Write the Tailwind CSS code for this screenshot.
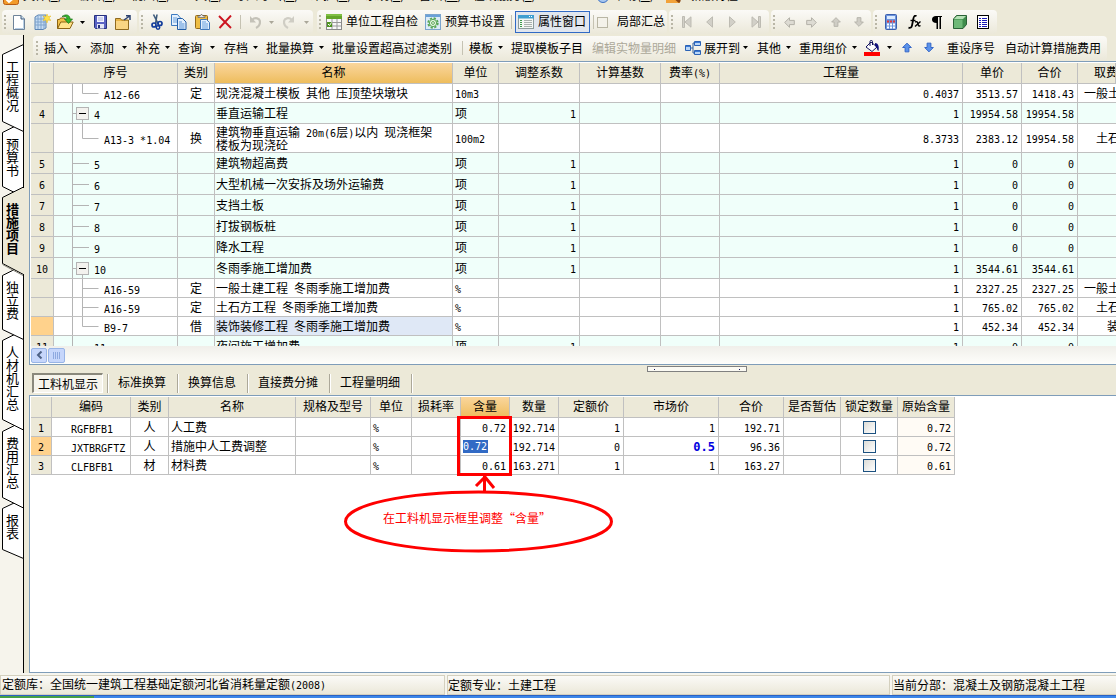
<!DOCTYPE html>
<html lang="zh-CN">
<head>
<meta charset="utf-8">
<title>措施项目</title>
<script src="https://cdn.jsdelivr.net/npm/@tailwindcss/browser@4"></script>
</head>
<body class="h-screen overflow-hidden flex flex-col bg-[#ece9d8] text-black text-[12px] leading-[16px] font-['Noto_Sans_CJK_SC',sans-serif] whitespace-nowrap">

<svg class="hidden">
  <symbol id="caret" viewBox="0 0 5 3"><path d="M0 0h5L2.5 3z"/></symbol>
  <symbol id="grip" viewBox="0 0 2 14"><path fill="#b9b6a6" d="M0 0h2v2H0zM0 4h2v2H0zM0 8h2v2H0zM0 12h2v2H0z"/></symbol>
  <symbol id="arrow" viewBox="0 0 11 11"><path stroke-linejoin="round" d="M5.5.7l4.8 4.8H7.6v4.8H3.4V5.500H.7z"/></symbol>
</svg>

<!-- menu bar, scrolled so only its lower edge shows -->
<nav class="h-[10px] shrink-0 overflow-hidden flex items-end pb-[7px]">
  <svg class="ml-[3px] mr-[4px] -mb-[2px] shrink-0" width="16" height="16" viewBox="0 0 16 16"><rect x=".5" y=".5" width="15" height="15" rx="2" fill="#f29a28" stroke="#b85a10"/><path d="M3 10l3 3 7-6" stroke="#fff" stroke-width="2" fill="none"/></svg>
  <a href="#" class="w-[54px]">文件(<u>F</u>)</a><a href="#" class="w-[54px]">编辑(<u>E</u>)</a><a href="#" class="w-[52px]">视图(<u>V</u>)</a><a href="#" class="w-[51px]">工具(<u>T</u>)</a><a href="#" class="w-[77px]">导入导出(<u>D</u>)</a><a href="#" class="w-[54px]">维护(<u>D</u>)</a><a href="#" class="w-[54px]">系统(<u>S</u>)</a><a href="#" class="w-[54px]">窗口(<u>W</u>)</a><a href="#" class="w-[70px]">在线服务(<u>L</u>)</a>
  <a href="#" class="ml-[54px] w-[69px] flex gap-1"><svg width="12" height="16" viewBox="0 0 12 16"><circle cx="6" cy="10" r="5.500" fill="#a9c8f0" stroke="#3c6fc0"/></svg><span>帮助(<u>H</u>)</span></a>
  <a href="#" class="flex gap-2"><svg width="16" height="16" viewBox="0 0 16 16"><rect width="14" height="16" fill="#f2a23a"/><path d="M6 8l8 7" stroke="#8a4510" stroke-width="3"/></svg>新版特性</a>
</nav>

<!-- icon toolbar -->
<div class="h-[25px] shrink-0 flex pl-[2px] pb-px gap-[2px]">
  <div class="flex items-center w-[135px] rounded bg-linear-to-b from-[#fbfaf7] to-[#ebe8d9]">
    <svg class="ml-[2px] mr-[3px]" width="2" height="14"><use href="#grip"/></svg>
    <button aria-label="新建" class="w-[20px] flex justify-center"><svg width="12" height="15" viewBox="0 0 12 15"><path d="M1 .5h7l3.500 3.500v10.500H.5V.5z" fill="#fff" stroke="#6e8399"/><path d="M8 .5V4h3.500" fill="#cfe0f2" stroke="#3d5878"/><path d="M10.500 5v8.500H2" stroke="#b8cfe6" fill="none"/></svg></button>
    <button aria-label="新建向导" class="w-[26px] flex justify-center"><svg width="17" height="16" viewBox="0 0 17 16"><path d="M1 3l3-2h8v13l-3 1.500H1z" fill="#c6dcf3" stroke="#5b84b4"/><path d="M4 2v13M7 2v13M10 2v13M1 5h11M1 8h11M1 11h11" stroke="#7ea3cd" fill="none"/><path d="M13 0l1 2.500L17 2l-2 2 2 2.500-3-.5-1 3-1-3-3 .5 2-2.500-2-2 3 .5z" fill="#ffe14a" stroke="#e5b820" stroke-width=".5"/></svg></button>
    <button aria-label="打开" class="w-[20px] flex justify-center"><svg width="17" height="16" viewBox="0 0 17 16"><path d="M.5 14.500V5.500h2l1-1.500h4l1 1.500h4v9z" fill="#f2c14a" stroke="#8c6414"/><path d="M.7 14.500l3-6.500h12.500l-3.200 6.500z" fill="#ffe48c" stroke="#8c6414"/><path d="M5 2.500C9-.5 13 1 13 5h2.500l-4 4.500-4-4.500H10c0-2-2-3-5-2.500z" fill="#35b52c" stroke="#11700f" stroke-width=".7"/></svg></button>
    <button aria-label="打开列表" class="w-[14px] flex justify-center"><svg width="5" height="3"><use href="#caret"/></svg></button>
    <button aria-label="保存" class="w-[22px] flex justify-center"><svg width="13" height="14" viewBox="0 0 13 14"><path d="M.5.5h12v13H1.500l-1-1z" fill="#5a63c4" stroke="#26307e"/><path d="M3 1h7v6H3z" fill="#f4f5ff"/><path d="M4 3h5M4 5h5" stroke="#a9b0dc"/><path d="M3 9h7v4.500H3z" fill="#e4e6f6"/><path d="M4 10h2v3H4z" fill="#26307e"/></svg></button>
    <button aria-label="导出" class="w-[24px] flex justify-center"><svg width="16" height="15" viewBox="0 0 16 15"><path d="M.5 14.500v-11h5l1 1.500h7v9.500z" fill="#e8b548" stroke="#8f6a20"/><path d="M1 6h12v8H1z" fill="#f9d583"/><path d="M9 5l5-3.500M11 .8h4V5" stroke="#2d4270" stroke-width="1.500" fill="none"/></svg></button>
  </div>
  <div class="flex items-center w-[174px] rounded bg-linear-to-b from-[#fbfaf7] to-[#ebe8d9]">
    <svg class="ml-[2px] mr-[3px]" width="2" height="14"><use href="#grip"/></svg>
    <button aria-label="剪切" class="w-[22px] flex justify-center"><svg width="12" height="16" viewBox="0 0 12 16"><path d="M2.500.5l5 10M6 .5L4.500 10" stroke="#3e5b7c" stroke-width="1.600"/><circle cx="3" cy="11" r="2" fill="none" stroke="#123c9c" stroke-width="1.700"/><circle cx="9" cy="9.500" r="2" fill="none" stroke="#123c9c" stroke-width="1.700"/><circle cx="7" cy="13.500" r="1.700" fill="none" stroke="#123c9c" stroke-width="1.500"/></svg></button>
    <button aria-label="复制" class="w-[22px] flex justify-center"><svg width="16" height="16" viewBox="0 0 16 16"><path d="M.5.5h6L9.500 4v7.500h-9z" fill="#e4f0fd" stroke="#3d7ac0"/><path d="M2 4h4M2 6h5M2 8h5" stroke="#6ba1dd"/><path d="M6.500 4.500h5l3.500 3.500v7.500H6.500z" fill="#e4f0fd" stroke="#245fa8"/><path d="M8 8h3M8 10h5.500M8 12h5.500M8 14h5.500" stroke="#5a95d8"/></svg></button>
    <button aria-label="粘贴" class="w-[24px] flex justify-center"><svg width="15" height="16" viewBox="0 0 15 16"><rect x=".5" y="1.500" width="12" height="13" rx="1" fill="#eebd43" stroke="#93691a"/><path d="M3 3.500h7V2H8L7 .5H6L5 2H3z" fill="#e8e8e8" stroke="#666" stroke-width=".7"/><path d="M5.500 5.500h6l3 3v7h-9z" fill="#e4f0fd" stroke="#4279bb"/><path d="M7 8h4M7 10h6M7 12h6M7 14h6" stroke="#6ba1dd"/></svg></button>
    <button aria-label="删除" class="w-[22px] flex justify-center"><svg width="14" height="14" viewBox="0 0 14 14"><path d="M1 1l12 12M13 .5L1.500 13" stroke="#cc1420" stroke-width="1.900"/></svg></button>
    <span class="ml-[4px] mr-[5px] w-px h-[14px] bg-[#c5c2b2]"></span>
    <button aria-label="撤销" class="w-[17px] flex justify-center"><svg width="12" height="13" viewBox="0 0 12 13"><path d="M1 0v6.500h6z" fill="#c4c2b8"/><path d="M3 4c3-3 8-2 8 2 0 3-2 5-4 6" fill="none" stroke="#c4c2b8" stroke-width="2.200"/></svg></button>
    <button aria-label="撤销列表" class="w-[16px] flex justify-center"><svg width="5" height="3" fill="#aaa799"><use href="#caret"/></svg></button>
    <button aria-label="恢复" class="w-[20px] flex justify-center"><svg width="12" height="13" viewBox="0 0 12 13"><path d="M11 0v6.500H5z" fill="#cfcdc4"/><path d="M9 4C6 1 1 2 1 6c0 3 2 5 4 6" fill="none" stroke="#cfcdc4" stroke-width="2.200"/></svg></button>
    <button aria-label="恢复列表" class="w-[14px] flex justify-center"><svg width="5" height="3" fill="#aaa799"><use href="#caret"/></svg></button>
  </div>
  <div class="ml-[2px] flex items-center w-[350px] rounded bg-linear-to-b from-[#fbfaf7] to-[#ebe8d9]">
    <svg class="ml-[2px] mr-[3px]" width="2" height="14"><use href="#grip"/></svg>
    <button class="w-[100px] pl-[2px] flex items-center gap-1"><svg width="16" height="16" viewBox="0 0 16 16"><rect x=".5" y=".5" width="15" height="15" fill="#f8f8f8" stroke="#8a8a8a"/><path d="M0 0h16v5H0z" fill="#64a52a"/><path d="M0 1h16" stroke="#9bd95c"/><path d="M1 8.500h14M1 12h14M6 5v10M11 5v10" stroke="#999"/><path d="M1 8h5v5H1z" fill="#4f9420"/><path d="M2 10l1.500 1.500L5.500 8.500" stroke="#fff" fill="none"/></svg><span class="pb-[2px]">单位工程自检</span></button>
    <button class="w-[87px] pl-px flex items-center gap-1"><svg width="16" height="16" viewBox="0 0 16 16"><rect x=".5" y=".5" width="15" height="15" fill="#dcebf8" stroke="#7ba5ce"/><path d="M1 1h14v2H1z" fill="#6aa0d8"/><circle cx="8" cy="9" r="4.700" fill="none" stroke="#58a653" stroke-width="2" stroke-dasharray="2.200 1.500"/><circle cx="8" cy="9" r="3.600" fill="#e9f6e4" stroke="#58a653"/><circle cx="8" cy="9" r="1.400" fill="#fff" stroke="#58a653"/></svg><span class="pb-[2px]">预算书设置</span></button>
    <span class="w-px h-[14px] mr-[3px] bg-[#c5c2b2]"></span>
    <button class="w-[75px] h-[22px] pl-[2px] flex items-center gap-1 border border-[#316ac5] bg-[#e1e6ee]"><svg width="16" height="14" viewBox="0 0 16 14"><rect x=".5" y=".5" width="15" height="13" fill="#f4f7f4" stroke="#8d9c9c"/><path d="M0 0h16v3.500H0z" fill="#3f9ed0"/><path d="M11 1.500h1M13 1.500h1" stroke="#fff"/><path d="M2 5.500h2M2 7.500h2M2 9.500h2M2 11.500h2" stroke="#3d9c4c"/><path d="M6 5.500h8M6 7.500h8M6 9.500h8M6 11.500h8" stroke="#a9b0ae"/></svg><span class="pb-[2px]">属性窗口</span></button>
    <span class="w-px h-[14px] ml-[3px] mr-[3px] bg-[#c5c2b2]"></span>
    <label class="flex items-center gap-[9px]"><input type="checkbox" class="appearance-none size-[11px] border border-[#b9b6a4] bg-[#f4f2ea]"><span class="pb-[2px]">局部汇总</span></label>
  </div>
  <div class="flex items-center w-[100px] rounded bg-linear-to-b from-[#fbfaf7] to-[#ebe8d9]">
    <svg class="ml-[2px] mr-[3px]" width="2" height="14"><use href="#grip"/></svg>
    <button aria-label="首行" class="w-[22px] flex justify-center"><svg width="10" height="12" viewBox="0 0 10 12" fill="#d2d0c8" stroke="#bdbbb2"><path d="M.5.5h2v11h-2zM9 .8v10.400L3 6z"/></svg></button>
    <button aria-label="上一行" class="w-[23px] flex justify-center"><svg width="7" height="12" viewBox="0 0 7 12" fill="#d2d0c8" stroke="#bdbbb2"><path d="M6.500.8v10.400L.7 6z"/></svg></button>
    <button aria-label="下一行" class="w-[22px] flex justify-center"><svg width="7" height="12" viewBox="0 0 7 12" fill="#d2d0c8" stroke="#bdbbb2"><path d="M.5.8v10.400L6.300 6z"/></svg></button>
    <button aria-label="末行" class="w-[26px] flex justify-center"><svg width="10" height="12" viewBox="0 0 10 12" fill="#d2d0c8" stroke="#bdbbb2"><path d="M7.500.5h2v11h-2zM1 .8v10.400L7 6z"/></svg></button>
  </div>
  <div class="flex items-center w-[100px] rounded bg-linear-to-b from-[#fbfaf7] to-[#ebe8d9]">
    <svg class="ml-[2px] mr-[3px]" width="2" height="14"><use href="#grip"/></svg>
    <button aria-label="升级" class="w-[22px] flex justify-center"><svg class="-rotate-90" width="11" height="11" fill="#dddbd3" stroke="#b3b1a8"><use href="#arrow"/></svg></button>
    <button aria-label="降级" class="w-[23px] flex justify-center"><svg class="rotate-90" width="11" height="11" fill="#dddbd3" stroke="#b3b1a8"><use href="#arrow"/></svg></button>
    <button aria-label="上移" class="w-[25px] flex justify-center"><svg width="10" height="10" fill="#cfcdc5" stroke="#b3b1a8"><use href="#arrow"/></svg></button>
    <button aria-label="下移" class="w-[21px] flex justify-center"><svg class="rotate-180" width="10" height="10" fill="#cfcdc5" stroke="#b3b1a8"><use href="#arrow"/></svg></button>
  </div>
  <div class="flex items-center w-[124px] rounded bg-linear-to-b from-[#fbfaf7] to-[#ebe8d9]">
    <svg class="ml-[2px] mr-[3px]" width="2" height="14"><use href="#grip"/></svg>
    <button aria-label="计算器" class="w-[22px] flex justify-center"><svg width="12" height="16" viewBox="0 0 12 16"><rect x=".5" y=".5" width="11" height="15" rx="1" fill="#6d94dc" stroke="#3a5fae"/><path d="M2 2h8v3H2z" fill="#dcebff"/><path d="M2 7.500h8" stroke="#e03a3a" stroke-width="2" stroke-dasharray="2 1"/><path d="M2 10.500h8M2 13.500h8" stroke="#fff" stroke-width="2" stroke-dasharray="2 1"/></svg></button>
    <button aria-label="函数" class="w-[24px] flex justify-center"><svg width="13" height="14" viewBox="0 0 13 14" fill="none" stroke="#000"><path d="M8.500 1C6.500.2 5.800 1.500 5.300 4L4 10.500c-.4 2-1.500 2.800-3.500 2.200" stroke-width="1.800"/><path d="M2.500 5.500h5" stroke-width="1.400"/><path d="M7 7c2-1 2.500 0 3 2s1 2.500 2.500 1.500M12.500 6.500l-5.500 5" stroke-width="1.400"/></svg></button>
    <button aria-label="段落" class="w-[22px] flex justify-center"><svg width="10" height="13" viewBox="0 0 10 13"><path d="M4 0h6v1H9v12H7.500V1H6v12H4.500V7C1.500 7 0 5.500 0 3.500S1.500 0 4 0z"/></svg></button>
    <button aria-label="三维" class="w-[24px] flex justify-center"><svg width="14" height="14" viewBox="0 0 14 14"><path d="M.5 4l3-3.500h10v9L10 13.500H.5z" fill="#3f8c4c" stroke="#2a6236"/><path d="M1 4l3-3h9L10 4z" fill="#b5e0b5"/><path d="M1 4.500h8.500V13H1z" fill="#6eb877"/></svg></button>
    <button aria-label="列表" class="w-[22px] flex justify-center"><svg width="12" height="14" viewBox="0 0 12 14"><rect x=".5" y=".5" width="11" height="13" fill="#fff" stroke="#000"/><path d="M2 3.500h2M2 5.500h2M2 7.500h2M2 9.500h2M2 11.500h2M5 3.500h5M5 5.500h5M5 7.500h5M5 9.500h5M5 11.500h5" stroke="#1b1bb8"/></svg></button>
  </div>
</div>

<div class="flex-1 min-h-0 flex">
  <!-- page tabs -->
  <aside class="relative w-[24px] shrink-0 bg-[#f6f4ec] border-r border-black">
    <svg class="absolute inset-0" width="24" height="640" viewBox="0 35 24 640">
      <g fill="#fff" stroke="#000">
        <path d="M23.500 498.500L2.500 508.500V549.500L23.500 558.500z"/>
        <path d="M23.500 421L2.500 431.500V497.500L23.500 508z"/>
        <path d="M23.500 330L2.500 340.500V419.500L23.500 430z"/>
        <path d="M23.500 265L2.500 275.500V329.500L23.500 339.500z"/>
        <path d="M23.500 122L2.500 132.500V186.500L23.500 197z"/>
        <path d="M23.500 44.500L2.500 54.500V121.500L23.500 131.500z"/>
        <path d="M23.500 187L2.500 197.500V263.500L23.500 274.500z" fill="#ece9d8"/>
      </g>
      <path d="M2.500 264.500L23 275.500" stroke="#8a887c"/>
      <path d="M23.500 188V274" stroke="#ece9d8"/>
    </svg>
    <div class="relative pt-[14px] flex flex-col text-[13px]">
      <button class="h-[77px] pb-[3px] w-[24px] flex items-center justify-center [writing-mode:vertical-rl]">工程概况</button>
      <button class="h-[66px] pb-[3px] w-[24px] flex items-center justify-center [writing-mode:vertical-rl]">预算书</button>
      <button class="h-[77px] pb-[3px] w-[24px] flex items-center justify-center [writing-mode:vertical-rl] font-bold">措施项目</button>
      <button class="h-[66px] pb-[3px] w-[24px] flex items-center justify-center [writing-mode:vertical-rl]">独立费</button>
      <button class="h-[90px] pb-[3px] w-[24px] flex items-center justify-center [writing-mode:vertical-rl]">人材机汇总</button>
      <button class="h-[78px] pb-[3px] w-[24px] flex items-center justify-center [writing-mode:vertical-rl]">费用汇总</button>
      <button class="h-[51px] pb-[3px] w-[24px] flex items-center justify-center [writing-mode:vertical-rl]">报表</button>
    </div>
  </aside>

  <main class="flex-1 min-w-0 flex flex-col pl-[5px]">
    <!-- command toolbar -->
    <div class="mt-px ml-[4px] mr-[9px] pb-[2px] h-[25px] shrink-0 flex items-center rounded bg-linear-to-b from-[#fbfaf7] to-[#ebe8d9]">
      <svg class="ml-[3px] mr-[6px] shrink-0" width="2" height="14"><use href="#grip"/></svg>
      <button class="w-[46px] flex items-center gap-[8px]">插入<svg width="5" height="3"><use href="#caret"/></svg></button>
      <button class="w-[46px] flex items-center gap-[8px]">添加<svg width="5" height="3"><use href="#caret"/></svg></button>
      <button class="w-[42px] flex items-center gap-[5px]">补充<svg width="5" height="3"><use href="#caret"/></svg></button>
      <button class="w-[46px] flex items-center gap-[8px]">查询<svg width="5" height="3"><use href="#caret"/></svg></button>
      <button class="w-[42px] flex items-center gap-[5px]">存档<svg width="5" height="3"><use href="#caret"/></svg></button>
      <button class="w-[66px] flex items-center gap-[5px]">批量换算<svg width="5" height="3"><use href="#caret"/></svg></button>
      <button class="w-[130px] text-left">批量设置超高过滤类别</button>
      <span class="w-px h-[14px] mr-[6px] bg-[#c5c2b2]"></span>
      <button class="w-[42px] flex items-center gap-[5px]">模板<svg width="5" height="3"><use href="#caret"/></svg></button>
      <button class="w-[81px] text-left">提取模板子目</button>
      <button disabled class="w-[93px] text-left text-[#aca899]">编辑实物量明细</button>
      <button class="w-[72px] flex items-center gap-[3px]"><svg width="16" height="14" viewBox="0 0 16 14"><path d="M5 7h3M8 2v10M8 2h2M8 12h2" stroke="#35619c" fill="none"/><g fill="#b9d6f7" stroke="#2b62b5"><path d="M.5 4.500h5v5h-5zM9.500.5h6v4h-6zM9.500 9.500h6v4h-6z"/></g><path d="M1 5.500h4M10 1.500h5M10 10.500h5" stroke="#3d7bd6"/></svg>展开到<svg width="5" height="3"><use href="#caret"/></svg></button>
      <button class="w-[42px] flex items-center gap-[5px]">其他<svg width="5" height="3"><use href="#caret"/></svg></button>
      <button class="w-[65px] flex items-center gap-[5px]">重用组价<svg width="5" height="3"><use href="#caret"/></svg></button>
      <button aria-label="填充颜色" class="w-[38px] flex items-center gap-[7px]"><svg width="16" height="16" viewBox="0 0 16 16"><path d="M0 12h16v4H0z" fill="red"/><path d="M2 7l5-5 6 5-5 4.500z" fill="#fff" stroke="#10105c"/><path d="M6 6V1.500C6 0 8.500 0 8.500 1.500V5" fill="none" stroke="#10105c"/><path d="M11 3c3 0 4.500 3 3.500 8-2-1-1-4-3.500-5z" fill="#10107c"/></svg><svg width="5" height="3"><use href="#caret"/></svg></button>
      <button aria-label="上移" class="w-[22px] flex"><svg width="10" height="11" fill="#5b92ea" stroke="#2c5fc4"><use href="#arrow"/></svg></button>
      <button aria-label="下移" class="w-[23px] flex"><svg class="rotate-180" width="10" height="11" fill="#5b92ea" stroke="#2c5fc4"><use href="#arrow"/></svg></button>
      <button class="w-[58px] text-left">重设序号</button>
      <button class="text-left">自动计算措施费用</button>
    </div>

    <!-- measures grid -->
    <section class="shrink-0 border-l border-y border-[#7f9db9] bg-white pl-px pt-px">
      <div class="h-[283px] overflow-hidden">
        <table class="w-full table-fixed border-separate border-spacing-0">
          <colgroup><col class="w-[23px]"><col class="w-[124px]"><col class="w-[37px]"><col class="w-[238px]"><col class="w-[46px]"><col class="w-[81px]"><col class="w-[81px]"><col class="w-[59px]"><col><col class="w-[59px]"><col class="w-[56px]"><col class="w-[38px]"></colgroup>
          <thead><tr id="head1"></tr></thead>
          <tbody id="body1"></tbody>
        </table>
      </div>
      <div class="h-[18px] flex items-center bg-linear-to-b from-[#f0efea] to-[#fefefb]">
        <button aria-label="向左滚动" class="w-[16px] h-[15px] rounded-[2px] border border-[#98b4e6] bg-[#c6d6fb] flex items-center justify-center"><svg width="7" height="8" viewBox="0 0 7 8"><path d="M5.500.5L2 4l3.500 3.500" fill="none" stroke="#4d6185" stroke-width="2"/></svg></button>
        <span class="ml-px w-[17px] h-[15px] rounded-[2px] border border-[#98b4e6] bg-[#c6d6fb] flex items-center justify-center"><svg width="8" height="7" viewBox="0 0 8 7"><path d="M.5 0v7M2.500 0v7M4.500 0v7M6.500 0v7" stroke="#8ea9e0"/></svg></span>
      </div>
    </section>

    <!-- splitter and detail tabs -->
    <div class="relative h-[30px] shrink-0 flex items-center pl-[3px] pt-[6px]">
      <span class="absolute left-[618px] top-px w-[100px] h-[6px] border border-[#808080] bg-[#fbfaf3] flex items-center justify-between px-[6px]"><i class="size-px bg-[#10105c]"></i><i class="size-px bg-[#10105c]"></i></span>
      <button class="w-[71px] h-[20px] border-t-2 border-l-2 border-t-[#8a887c] border-l-[#8a887c] border-r border-b border-r-white border-b-white bg-[#f6f4ec] flex items-center justify-center">工料机显示</button>
      <span class="ml-[4px] w-[2px] h-[19px] border-r border-white bg-[#aca899]"></span>
      <button class="w-[68px] pr-[2px] pb-[2px] text-center">标准换算</button><span class="w-[2px] h-[19px] border-r border-white bg-[#aca899]"></span>
      <button class="w-[68px] pr-[2px] pb-[2px] text-center">换算信息</button><span class="w-[2px] h-[19px] border-r border-white bg-[#aca899]"></span>
      <button class="w-[80px] pr-[2px] pb-[2px] text-center">直接费分摊</button><span class="w-[2px] h-[19px] border-r border-white bg-[#aca899]"></span>
      <button class="w-[80px] pr-[2px] pb-[2px] text-center">工程量明细</button><span class="w-[2px] h-[19px] border-r border-white bg-[#aca899]"></span>
    </div>

    <!-- labour / material / machine grid -->
    <section class="relative flex-1 min-h-0 border-l border-y border-[#7f9db9] bg-white pl-px pt-px overflow-hidden">
      <table class="w-[924px] table-fixed border-separate border-spacing-0">
        <colgroup><col class="w-[21px]"><col class="w-[79px]"><col class="w-[38px]"><col class="w-[127px]"><col class="w-[75px]"><col class="w-[41px]"><col class="w-[49px]"><col class="w-[49px]"><col class="w-[49px]"><col class="w-[65px]"><col class="w-[95px]"><col class="w-[65px]"><col class="w-[57px]"><col class="w-[57px]"><col class="w-[57px]"></colgroup>
        <thead><tr id="head2"></tr></thead>
        <tbody id="body2"></tbody>
      </table>
      <!-- red annotation -->
      <svg class="absolute left-[310px] top-[18px] pointer-events-none" width="280" height="144" viewBox="340 414 280 144" fill="none" stroke="red" stroke-width="3">
        <rect x="458.500" y="417.500" width="52" height="57"/>
        <ellipse cx="478.500" cy="521.500" rx="133" ry="29.500"/>
        <path d="M484.500 476v16M476 486l9-9 9 11"/>
      </svg>
      <p class="absolute left-[353px] top-[114px] text-[red]">在工料机显示框里调整“含量”</p>
    </section>
  </main>
</div>

<!-- status bar -->
<footer class="h-[25px] shrink-0 flex flex-col pt-[2px] bg-[#f6f5ee]">
  <div class="flex-1 flex gap-[2px]">
    <div class="w-[445px] pl-px flex items-center border border-[#d4d0be] bg-linear-to-b from-[#fbfaf7] to-[#ebe8d9]"><span>定额库：全国统一建筑工程基础定额河北省消耗量定额<span class="font-['DejaVu_Sans_Mono',monospace] text-[10px]">(2008)</span></span></div>
    <div class="flex-1 flex items-center border border-[#d4d0be] bg-linear-to-b from-[#fbfaf7] to-[#ebe8d9]">定额专业：土建工程</div>
    <div class="w-[224px] flex items-center border border-r-0 border-[#d4d0be] bg-linear-to-b from-[#fbfaf7] to-[#ebe8d9]">当前分部：混凝土及钢筋混凝土工程</div>
  </div>
  <div class="h-[3px] flex bg-[#3b86e8] border-t border-[#2a62c4]"><span class="w-[94px] bg-[#46a045]"></span></div>
</footer>

<script>
// Latin runs are set in a half-width monospaced face beside the 12px Chinese text
const mix = s => String(s).replace(/[\x20-\x7e]+/g, t => `<span class="font-['DejaVu_Sans_Mono',monospace] text-[10px] leading-[10px] whitespace-pre">${t}</span>`);
const TH = 'h-[21px] p-0 pb-[2px] font-normal text-center border-r border-b border-[#c0c0c0] overflow-hidden';
const TD = 'p-0 border-r border-b border-[#c0c0c0] overflow-hidden leading-[12px]';
const heads = (id, names, sel) => document.getElementById(id).innerHTML = names.map((n, i) =>
  `<th class="${TH} ${i === sel ? 'bg-linear-to-b from-[#fad69c] to-[#eebd5c]' : 'bg-[#ece9d8]'} ${n === '取费' ? 'pl-[16px]' : ''}">${mix(n)}</th>`).join('');

heads('head1', ['', '序号', '类别', '名称', '单位', '调整系数', '计算基数', '费率(%)', '工程量', '单价', '合价', '取费'], 3);

// [height, row number, tree kind, code, type, name, unit, factor, quantity, price, total, fee class]
const rows = [
  [19, '', 'last', 'A12-66', '定', '现浇混凝土模板 其他 压顶垫块墩块', '10m3', '', '0.4037', '3513.57', '1418.43', '一般土建'],
  [21, '4', 'open', '4', '', '垂直运输工程', '项', '1', '1', '19954.58', '19954.58', ''],
  [29, '', 'last', 'A13-3 *1.04', '换', '建筑物垂直运输 20m(6层)以内 现浇框架|楼板为现浇砼', '100m2', '', '8.3733', '2383.12', '19954.58', '土石方'],
  [21, '5', 'leaf', '5', '', '建筑物超高费', '项', '1', '1', '0', '0', ''],
  [21, '6', 'leaf', '6', '', '大型机械一次安拆及场外运输费', '项', '1', '1', '0', '0', ''],
  [21, '7', 'leaf', '7', '', '支挡土板', '项', '1', '1', '0', '0', ''],
  [21, '8', 'leaf', '8', '', '打拔钢板桩', '项', '1', '1', '0', '0', ''],
  [21, '9', 'leaf', '9', '', '降水工程', '项', '1', '1', '0', '0', ''],
  [21, '10', 'open', '10', '', '冬雨季施工增加费', '项', '1', '1', '3544.61', '3544.61', ''],
  [19, '', 'mid', 'A16-59', '定', '一般土建工程 冬雨季施工增加费', '%', '', '1', '2327.25', '2327.25', '一般土建'],
  [19, '', 'mid', 'A16-59', '定', '土石方工程 冬雨季施工增加费', '%', '', '1', '765.02', '765.02', '土石方'],
  [19, '', 'last', 'B9-7', '借', '装饰装修工程 冬雨季施工增加费', '%', '', '1', '452.34', '452.34', '装饰'],
  [21, '11', 'leaf', '11', '', '夜间施工增加费', '项', '1', '1', '0', '0', '']
];
const tree = (kind, h) => {
  const H = h - 1, m = Math.floor(H / 2) + .5;
  const art = {
    leaf: `<path d="M19 ${m}h16"/>`,
    open: `<path d="M19 ${m}h4M28.500 ${m + 6}V${H}"/><rect x="22.500" y="${m - 6}" width="12" height="12" fill="#f3f2ee"/><path d="M25 ${m}h7" stroke="#000"/>`,
    mid: `<path d="M28.500 0V${H}M28.500 ${m}h16"/>`,
    last: `<path d="M28.500 0V${m}h16"/>`
  }[kind];
  return `<svg class="shrink-0" width="${kind === 'mid' || kind === 'last' ? 50 : 40}" height="${H}" fill="none" stroke="#b4b4b4"><path d="M18.500 0V${H}"/>${art}</svg>`;
};
document.getElementById('body1').innerHTML = rows.map(r => {
  const [h, no, kind, code, type, name, unit, factor, qty, price, total, fee] = r;
  const hc = { 19: 'h-[19px]', 21: 'h-[21px]', 29: 'h-[29px]' }[h];
  const sel = code === 'B9-7';
  const feePad = { '一般土建': 'pl-[6px]', '土石方': 'pl-[18px]', '装饰': 'pl-[29px]' }[fee] || '';
  return `<tr class="${no ? 'bg-[#f0fffa]' : 'bg-white'}">
    <td class="${TD} ${hc} text-center ${sel ? 'bg-[#ffd28c]' : 'bg-[#ece9d8]'}">${mix(no)}</td>
    <td class="${TD}"><div class="flex items-center">${tree(kind, h)}<span class="pt-[2px]">${mix(code)}</span></div></td>
    <td class="${TD} text-center">${type}</td>
    <td class="${TD} pl-px ${sel ? 'bg-[#dfe8f6]' : ''}">${name.split('|').map(mix).join('<br>')}</td>
    <td class="${TD} pl-[2px]">${mix(unit)}</td>
    <td class="${TD} text-right pr-[3px]">${mix(factor)}</td>
    <td class="${TD}"></td><td class="${TD}"></td>
    <td class="${TD} text-right pr-[3px]">${mix(qty)}</td>
    <td class="${TD} text-right pr-[3px]">${mix(price)}</td>
    <td class="${TD} text-right pr-[3px]">${mix(total)}</td>
    <td class="${TD} border-r-0 ${feePad}">${fee}</td></tr>`;
}).join('');

heads('head2', ['', '编码', '类别', '名称', '规格及型号', '单位', '损耗率', '含量', '数量', '定额价', '市场价', '合价', '是否暂估', '锁定数量', '原始含量'], 7);
const items = [
  ['RGFBFB1', '人', '人工费', '0.72', '192.714', '1', '1', '192.71'],
  ['JXTBRGFTZ', '人', '措施中人工费调整', '0.72', '192.714', '0', '0.5', '96.36'],
  ['CLFBFB1', '材', '材料费', '0.61', '163.271', '1', '1', '163.27']
];
document.getElementById('body2').innerHTML = items.map((r, i) => {
  const [code, type, name, amt, qty, base, market, total] = r, sel = i === 1;
  return `<tr>
    <td class="${TD} h-[19px] text-center ${sel ? 'bg-[#ffd28c]' : 'bg-[#ece9d8]'}">${mix(i + 1)}</td>
    <td class="${TD} pl-[19px] pt-[2px]">${mix(code)}</td>
    <td class="${TD} text-center">${type}</td>
    <td class="${TD} pl-[2px]">${name}</td>
    <td class="${TD}"></td>
    <td class="${TD} pl-[2px]">${mix('%')}</td>
    <td class="${TD}"></td>
    <td class="${TD} ${sel ? 'pl-[2px]' : 'text-right pr-[3px]'}">${sel ? `<input aria-label="含量" value="${amt}" class="block w-[25px] h-[13px] bg-[#316ac5] text-white font-['DejaVu_Sans_Mono',monospace] text-[10px]">` : mix(amt)}</td>
    <td class="${TD} text-right pr-[3px]">${mix(qty)}</td>
    <td class="${TD} text-right pr-[3px]">${mix(base)}</td>
    <td class="${TD} text-right pr-[3px]">${sel ? `<b class="font-['DejaVu_Sans_Mono',monospace] text-[12px] text-[#0000e0]">${market}</b>` : mix(market)}</td>
    <td class="${TD} text-right pr-[3px]">${mix(total)}</td>
    <td class="${TD}"></td>
    <td class="${TD}"><input type="checkbox" aria-label="锁定数量" class="appearance-none block mx-auto size-[13px] border border-[#1c5180] bg-linear-to-br from-[#dcdcd7] to-white"></td>
    <td class="${TD} text-right pr-[3px] bg-[#fffbf5]">${mix(amt)}</td></tr>`;
}).join('');
</script>
</body>
</html>
